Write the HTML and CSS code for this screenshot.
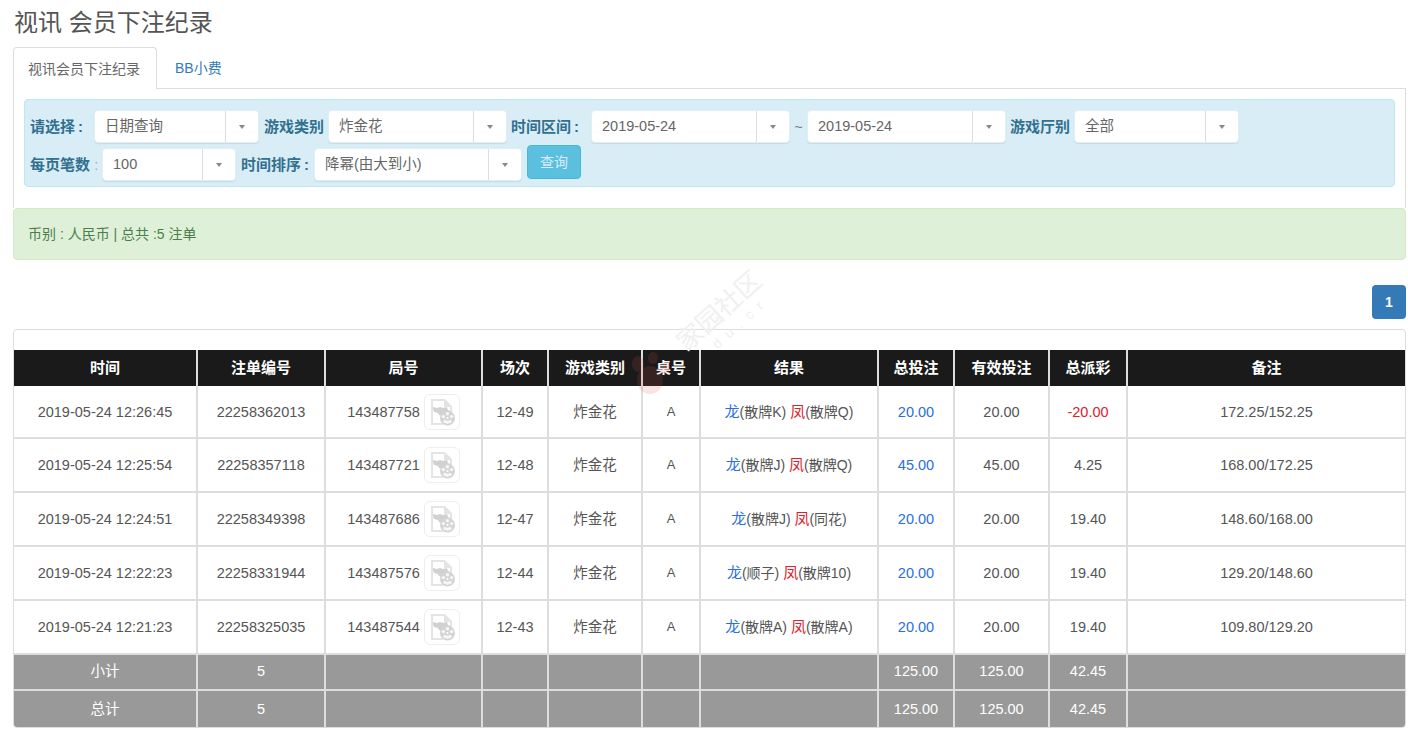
FILE: index.html
```html
<!DOCTYPE html>
<html lang="zh-CN">
<head>
    <meta charset="UTF-8">
    <meta name="viewport" content="width=device-width, initial-scale=1.0">
    <title>视讯 会员下注纪录</title>
    <link rel="stylesheet" href="styles.css">
</head>
<body>
    <svg class="icon-defs" width="0" height="0">
        <symbol id="video-doc" viewBox="0 0 28 28">
            <path d="M3 1h14l7 7v7h-2V9h-6V3H5v22h10v2H3z" fill="#dcdcdc"/>
            <path d="M5 9l4 1 3-1 3 1 4-1 1 3 2 1-2 2h-4l-2 3-3-1-1-2-4-1-1-3z" fill="#c2c2c2"/>
            <circle cx="19.5" cy="20" r="7.5" fill="#c6c6c6"/>
            <circle cx="19.5" cy="20" r="1.1" fill="#fff"/>
            <circle cx="19.5" cy="15.7" r="1.7" fill="#f4f4f4"/>
            <circle cx="19.5" cy="24.3" r="1.7" fill="#f4f4f4"/>
            <circle cx="15.4" cy="18.6" r="1.7" fill="#f4f4f4"/>
            <circle cx="23.6" cy="18.6" r="1.7" fill="#f4f4f4"/>
            <circle cx="17" cy="23.5" r="1.7" fill="#f4f4f4"/>
            <circle cx="22" cy="23.5" r="1.7" fill="#f4f4f4"/>
        </symbol>
    </svg>

    <h3 class="page-title">视讯 会员下注纪录</h3>

    <ul class="tabs">
        <li class="tab active">视讯会员下注纪录</li>
        <li class="tab"><a href="#">BB小费</a></li>
    </ul>

    <div class="tab-pane">
        <div class="filter">
            <div class="filter-row">
                <label class="w-select">请选择&#8201;:</label>
                <div class="combo c-date-type"><span class="combo-text">日期查询</span><span class="combo-arrow"></span></div>
                <label class="w-game">游戏类别</label>
                <div class="combo c-game"><span class="combo-text">炸金花</span><span class="combo-arrow"></span></div>
                <label class="w-range">时间区间&#8201;:</label>
                <div class="combo c-day"><span class="combo-text">2019-05-24</span><span class="combo-arrow"></span></div>
                <span class="tilde">~</span>
                <div class="combo c-day"><span class="combo-text">2019-05-24</span><span class="combo-arrow"></span></div>
                <label class="w-hall">游戏厅别</label>
                <div class="combo c-hall"><span class="combo-text">全部</span><span class="combo-arrow"></span></div>
            </div>
            <div class="filter-row">
                <label class="w-page">每页笔数<span class="colon-light"> :</span></label>
                <div class="combo c-page"><span class="combo-text">100</span><span class="combo-arrow"></span></div>
                <label class="w-sort">时间排序&#8201;:</label>
                <div class="combo c-sort"><span class="combo-text">降幂(由大到小)</span><span class="combo-arrow"></span></div>
                <button class="btn-query">查询</button>
            </div>
        </div>
    </div>

    <div class="alert">币别 : 人民币 | 总共 :5 注单</div>

    <div class="pager"><a class="page-num" href="#">1</a></div>

    <div class="panel">
        <table class="record">
            <colgroup>
                <col class="col-time"><col class="col-no"><col class="col-round"><col class="col-shoe"><col class="col-game">
                <col class="col-desk"><col class="col-result"><col class="col-bet"><col class="col-valid"><col class="col-pay"><col class="col-note">
            </colgroup>
            <thead>
                <tr>
                    <th>时间</th><th>注单编号</th><th>局号</th><th>场次</th><th>游戏类别</th><th>桌号</th>
                    <th>结果</th><th>总投注</th><th>有效投注</th><th>总派彩</th><th>备注</th>
                </tr>
            </thead>
            <tbody>
                <tr class="row-first">
                    <td>2019-05-24 12:26:45</td><td>22258362013</td>
                    <td><div class="round">143487758<a class="video-btn" href="#"><svg width="28" height="28"><use href="#video-doc"/></svg></a></div></td>
                    <td>12-49</td><td>炸金花</td><td class="desk">A</td>
                    <td class="result"><span class="dragon">龙</span>(散牌K) <span class="phoenix">凤</span>(散牌Q)</td>
                    <td class="bet">20.00</td><td>20.00</td><td class="loss">-20.00</td><td>172.25/152.25</td>
                </tr>
                <tr>
                    <td>2019-05-24 12:25:54</td><td>22258357118</td>
                    <td><div class="round">143487721<a class="video-btn" href="#"><svg width="28" height="28"><use href="#video-doc"/></svg></a></div></td>
                    <td>12-48</td><td>炸金花</td><td class="desk">A</td>
                    <td class="result"><span class="dragon">龙</span>(散牌J) <span class="phoenix">凤</span>(散牌Q)</td>
                    <td class="bet">45.00</td><td>45.00</td><td>4.25</td><td>168.00/172.25</td>
                </tr>
                <tr>
                    <td>2019-05-24 12:24:51</td><td>22258349398</td>
                    <td><div class="round">143487686<a class="video-btn" href="#"><svg width="28" height="28"><use href="#video-doc"/></svg></a></div></td>
                    <td>12-47</td><td>炸金花</td><td class="desk">A</td>
                    <td class="result"><span class="dragon">龙</span>(散牌J) <span class="phoenix">凤</span>(同花)</td>
                    <td class="bet">20.00</td><td>20.00</td><td>19.40</td><td>148.60/168.00</td>
                </tr>
                <tr>
                    <td>2019-05-24 12:22:23</td><td>22258331944</td>
                    <td><div class="round">143487576<a class="video-btn" href="#"><svg width="28" height="28"><use href="#video-doc"/></svg></a></div></td>
                    <td>12-44</td><td>炸金花</td><td class="desk">A</td>
                    <td class="result"><span class="dragon">龙</span>(顺子) <span class="phoenix">凤</span>(散牌10)</td>
                    <td class="bet">20.00</td><td>20.00</td><td>19.40</td><td>129.20/148.60</td>
                </tr>
                <tr>
                    <td>2019-05-24 12:21:23</td><td>22258325035</td>
                    <td><div class="round">143487544<a class="video-btn" href="#"><svg width="28" height="28"><use href="#video-doc"/></svg></a></div></td>
                    <td>12-43</td><td>炸金花</td><td class="desk">A</td>
                    <td class="result"><span class="dragon">龙</span>(散牌A) <span class="phoenix">凤</span>(散牌A)</td>
                    <td class="bet">20.00</td><td>20.00</td><td>19.40</td><td>109.80/129.20</td>
                </tr>
            </tbody>
            <tfoot>
                <tr class="row-sub">
                    <td>小计</td><td>5</td><td></td><td></td><td></td><td></td><td></td>
                    <td>125.00</td><td>125.00</td><td>42.45</td><td></td>
                </tr>
                <tr class="row-total">
                    <td>总计</td><td>5</td><td></td><td></td><td></td><td></td><td></td>
                    <td>125.00</td><td>125.00</td><td>42.45</td><td></td>
                </tr>
            </tfoot>
        </table>
    </div>

    <div class="watermark">
        <svg class="paw" width="40" height="44" viewBox="0 0 40 44">
            <ellipse cx="19" cy="28" rx="13" ry="14" fill="#d9534f"/>
            <ellipse cx="7" cy="12" rx="6" ry="8" fill="#d9534f"/>
            <ellipse cx="22" cy="6" rx="5" ry="6" fill="#d9534f"/>
            <ellipse cx="34" cy="16" rx="5" ry="6" fill="#d9534f"/>
        </svg>
        <span class="mark-text">家园社区</span>
        <span class="mark-sub">du.cr</span>
    </div>
</body>
</html>
```

FILE: styles.css
```css
* {
    box-sizing: border-box;
}
html, body {
    height: 730px;
    overflow: hidden;
}
body {
    position: relative;
    font-family: "Liberation Sans", "Noto Sans CJK SC", sans-serif;
    font-size: 14px;
    color: #333;
    background: #fff;
    margin: 0;
    padding: 0 2px 0 13px;
}
.icon-defs {
    display: block;
    height: 0;
}
.page-title {
    font-size: 24px;
    font-weight: normal;
    line-height: 26px;
    color: #555;
    margin: 0;
    padding: 10px 0 11px 1px;
}
.tabs {
    display: flex;
    list-style: none;
    height: 42px;
    margin: 0;
    padding: 0;
}
.tab {
    padding: 0 15px;
    line-height: 42px;
    margin-right: 3px;
}
.tab.active {
    background: #fff;
    border: 1px solid #ddd;
    border-bottom: 0;
    border-radius: 4px 4px 0 0;
    height: 42px;
    color: #666;
    padding: 0 16px 0 14px;
}
.tab a {
    color: #337ab7;
    text-decoration: none;
}
.tab-pane {
    height: 120px;
    margin-top: -1px;
    padding: 10px 10px 0 10px;
    border: 1px solid #ddd;
    border-bottom: 0;
}
.filter {
    height: 88px;
    padding: 10px 6px 0 5px;
    background: #d9edf7;
    border: 1px solid #bce8f1;
    border-radius: 4px;
}
.filter-row {
    display: flex;
    align-items: flex-start;
    height: 38px;
}
.filter-row label {
    font-size: 15px;
    font-weight: bold;
    line-height: 34px;
    color: #31708f;
    white-space: nowrap;
}
.colon-light {
    font-weight: normal;
    color: #aaa;
}
.w-select { width: 64px; }
.w-game { width: 64px; margin-left: 5px; }
.w-range { width: 80px; margin-left: 4px; }
.w-hall { width: 64px; margin-left: 4px; }
.w-page { width: 72px; }
.w-sort { width: 73px; margin-left: 5px; }
.combo {
    display: flex;
    height: 33px;
    background: #fff;
    border: 1px solid #e3eef3;
    border-radius: 4px;
    font-size: 14.5px;
    color: #666;
    box-shadow: 0 1px 1px rgba(0, 0, 0, 0.08);
}
.combo-text {
    flex: 1;
    padding-left: 10px;
    line-height: 30px;
}
.combo-arrow {
    width: 33px;
    border-left: 1px solid #ddd;
    display: flex;
    align-items: center;
    justify-content: center;
}
.combo-arrow::after {
    content: "";
    border-top: 4px solid #888;
    border-left: 3px solid transparent;
    border-right: 3px solid transparent;
}
.c-date-type { width: 165px; }
.c-game { width: 179px; }
.c-day { width: 199px; }
.c-hall { width: 165px; }
.c-page { width: 134px; }
.c-sort { width: 208px; }
.tilde {
    width: 17px;
    text-align: center;
    line-height: 34px;
    color: #777;
}
.btn-query {
    width: 54px;
    height: 34px;
    margin: -3px 0 0 5px;
    padding: 0 0 2px;
    font-family: inherit;
    font-size: 14px;
    color: #d9edf7;
    background: #5bc0de;
    border: 1px solid #46b8da;
    border-radius: 4px;
}
.alert {
    height: 52px;
    padding: 0 14px;
    line-height: 51px;
    color: #4a7f4b;
    background: #dff0d8;
    border: 1px solid #d6e9c6;
    border-radius: 4px;
}
.pager {
    display: flex;
    justify-content: flex-end;
    padding: 25px 0 10px;
}
.page-num {
    width: 34px;
    height: 34px;
    line-height: 34px;
    text-align: center;
    font-weight: bold;
    color: #fff;
    text-decoration: none;
    background: #337ab7;
    border-radius: 4px;
}
.panel {
    height: 399px;
    padding-top: 20px;
    border: 1px solid #ddd;
    border-radius: 4px;
    overflow: hidden;
}
.watermark {
    position: absolute;
    left: 625px;
    top: 270px;
    width: 170px;
    height: 130px;
    pointer-events: none;
}
.paw {
    position: absolute;
    left: 6px;
    top: 82px;
    opacity: 0.15;
}
.mark-text {
    position: absolute;
    left: 42px;
    top: 26px;
    font-size: 26px;
    line-height: 30px;
    color: #f0f0f0;
    white-space: nowrap;
    transform: rotate(-42deg);
}
.mark-sub {
    position: absolute;
    left: 80px;
    top: 44px;
    font-size: 14px;
    letter-spacing: 8px;
    color: #f0f0f0;
    white-space: nowrap;
    transform: rotate(-42deg);
}
.record {
    width: 100%;
    table-layout: fixed;
    border-collapse: collapse;
    font-size: 14.5px;
    line-height: 20px;
    text-align: center;
}
.col-time { width: 183px; }
.col-no { width: 128px; }
.col-round { width: 157px; }
.col-shoe { width: 66px; }
.col-game { width: 94px; }
.col-desk { width: 58px; }
.col-result { width: 178px; }
.col-bet { width: 76px; }
.col-valid { width: 95px; }
.col-pay { width: 78px; }
.record th {
    height: 36px;
    padding: 0 0 1px;
    font-size: 15px;
    color: #fff;
    background: #1a1a1a;
    border-left: 2px solid #ddd;
    border-right: 2px solid #ddd;
}
.record td {
    height: 54px;
    padding: 0;
    color: #555;
    border: 2px solid #ddd;
}
.record th:first-child, .record td:first-child {
    border-left: 0;
}
.record th:last-child, .record td:last-child {
    border-right: 0;
}
.record .row-first td {
    height: 52px;
    border-top: 0;
    border-bottom-width: 1px;
}
.record tfoot td {
    height: 36px;
    padding-bottom: 2px;
    color: #fff;
    background: #999;
}
.record .row-total td {
    height: 37px;
    padding-bottom: 1px;
    border-bottom: 0;
}
.round {
    display: flex;
    align-items: center;
    justify-content: center;
}
.desk {
    font-size: 13px;
}
.result {
    font-size: 14px;
    white-space: nowrap;
}
.video-btn {
    display: flex;
    align-items: center;
    justify-content: center;
    width: 36px;
    height: 36px;
    margin-left: 4px;
    background: #fff;
    border: 1px solid #eee;
    border-radius: 6px;
}
.video-btn svg {
    opacity: 0.75;
}
.dragon, .phoenix {
    font-size: 15px;
}
.record td.bet, .dragon {
    color: #2a6fdb;
}
.record td.loss, .phoenix {
    color: #e0202e;
}
```
